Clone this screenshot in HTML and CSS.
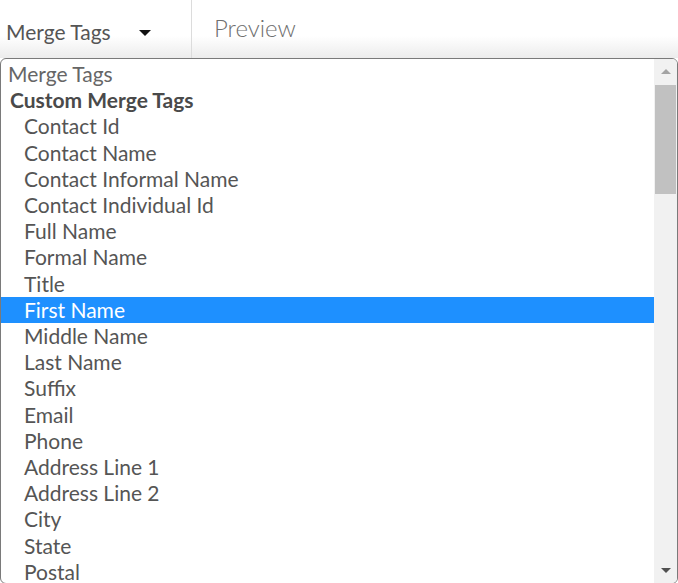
FILE: index.html
```html
<!DOCTYPE html>
<html lang="en">
<head>
    <meta charset="UTF-8">
    <meta name="viewport" content="width=device-width, initial-scale=1.0">
    <title>Merge Tags</title>
    <link rel="stylesheet" href="styles.css">
</head>
<body>
    <div class="toolbar">
        <div class="tag-select">
            <span>Merge Tags</span>
            <span class="caret"></span>
        </div>
        <div class="preview-tab">Preview</div>
    </div>

    <div class="tag-list">
        <div class="options">
            <div class="option placeholder">Merge Tags</div>
            <div class="group-label">Custom Merge Tags</div>
            <div class="option">Contact Id</div>
            <div class="option">Contact Name</div>
            <div class="option">Contact Informal Name</div>
            <div class="option">Contact Individual Id</div>
            <div class="option">Full Name</div>
            <div class="option">Formal Name</div>
            <div class="option">Title</div>
            <div class="option selected">First Name</div>
            <div class="option">Middle Name</div>
            <div class="option">Last Name</div>
            <div class="option">Suffix</div>
            <div class="option">Email</div>
            <div class="option">Phone</div>
            <div class="option">Address Line 1</div>
            <div class="option">Address Line 2</div>
            <div class="option">City</div>
            <div class="option">State</div>
            <div class="option">Postal</div>
        </div>
        <div class="scrollbar">
            <div class="arrow-btn"><span class="arrow-up"></span></div>
            <div class="thumb"></div>
            <div class="track"></div>
            <div class="arrow-btn"><span class="arrow-down"></span></div>
        </div>
    </div>
</body>
</html>
```

FILE: styles.css
```css
body {
    font-family: 'Lato', 'Liberation Sans', sans-serif;
    margin: 0;
    padding: 0;
    background-color: #fff;
    color: #555;
    overflow: hidden;
}
.toolbar {
    display: flex;
    height: 58px;
    background: linear-gradient(#fff 0%, #fff 62%, #ececec 100%);
}
.tag-select {
    width: 192px;
    border-right: 1px solid #dcdcdc;
    display: flex;
    align-items: center;
    padding: 5px 0 0 6px;
    box-sizing: border-box;
    font-size: 21px;
    color: #555;
}
.caret {
    width: 0;
    height: 0;
    border-left: 6px solid transparent;
    border-right: 6px solid transparent;
    border-top: 6px solid #111;
    margin-left: 28px;
    margin-top: 2px;
}
.preview-tab {
    padding: 13px 0 0 22px;
    font-size: 24px;
    font-weight: 300;
    color: #6f6f6f;
}
.tag-list {
    display: flex;
    height: 524px;
    border: 1px solid #7a7a7a;
    border-radius: 6px;
    overflow: hidden;
    background-color: #fff;
}
.options {
    flex: 1;
    padding-top: 2px;
    font-size: 21px;
    line-height: 26.2px;
}
.option {
    padding-left: 23px;
    white-space: nowrap;
}
.option.placeholder {
    padding-left: 7px;
    color: #666;
}
.group-label {
    padding-left: 9px;
    font-weight: bold;
    color: #4a4a4a;
}
.option.selected {
    background-color: #1e90ff;
    color: #fff;
}
.scrollbar {
    width: 23px;
    background-color: #f1f1f1;
    display: flex;
    flex-direction: column;
}
.arrow-btn {
    height: 25px;
    display: flex;
    justify-content: center;
    align-items: center;
}
.arrow-up {
    width: 0;
    height: 0;
    border-left: 5px solid transparent;
    border-right: 5px solid transparent;
    border-bottom: 5px solid #a3a3a3;
}
.arrow-down {
    width: 0;
    height: 0;
    border-left: 5px solid transparent;
    border-right: 5px solid transparent;
    border-top: 5px solid #505050;
}
.thumb {
    height: 109px;
    margin: 1px 1px 0 1px;
    background-color: #c1c1c1;
}
.track {
    flex: 1;
}
```
